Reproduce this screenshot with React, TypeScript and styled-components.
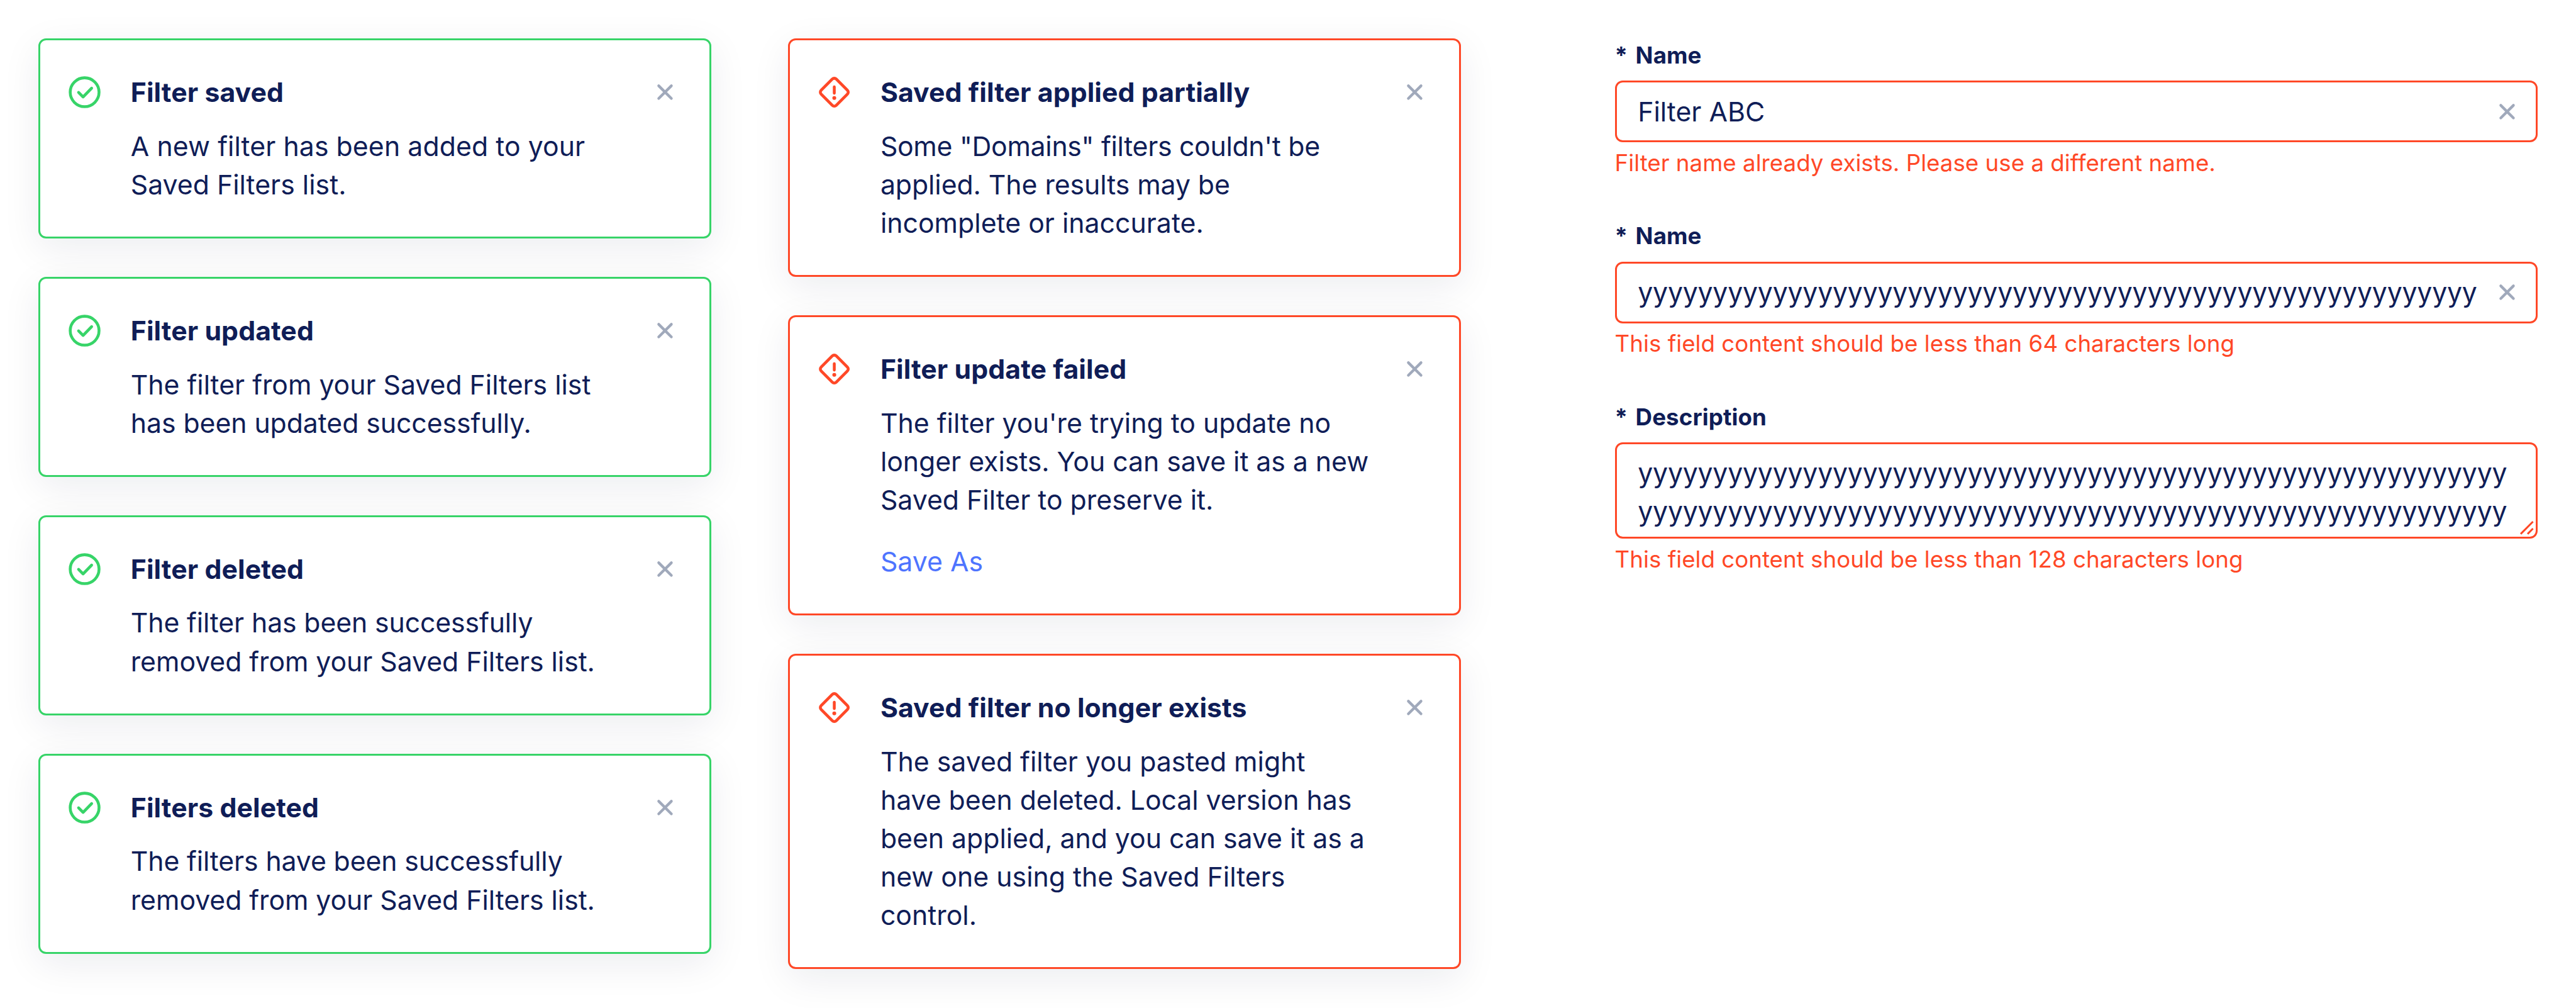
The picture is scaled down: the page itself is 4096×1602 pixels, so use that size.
import React from "react";
import styled, { createGlobalStyle } from "styled-components";

// One design unit: the sheet is 1340 units wide.
const u = (n: number) => `${(n * 4096) / 1340}px`;

const colors = {
  text: "#0f1d57",
  success: "#37d468",
  error: "#ff4827",
  link: "#4e74ff",
  icon: "#a0a9bb",
};

const GlobalStyle = createGlobalStyle`
  *, *::before, *::after { box-sizing: border-box; }
  body {
    margin: 0;
    background: #fff;
    color: ${colors.text};
    font-family: Inter, "Liberation Sans", sans-serif;
    font-size: ${u(14)};
    line-height: ${u(20)};
  }
`;

const Page = styled.main`
  display: flex;
  align-items: flex-start;
  width: ${u(1340)};
  height: 1602px;
  padding: ${u(20)};
  overflow: hidden;
`;

const Column = styled.section`
  display: flex;
  flex-direction: column;
  gap: ${u(20)};
  width: ${u(350)};
  margin-right: ${u(40)};
`;

const Form = styled.form`
  display: flex;
  flex-direction: column;
  width: ${u(480)};
  margin-left: ${u(40)};
`;

const Toast = styled.article<{ $tone: Tone }>`
  display: grid;
  grid-template-columns: ${u(20)} 1fr ${u(16)};
  column-gap: ${u(14)};
  padding: ${u(17)} ${u(15)} ${u(17)} ${u(13)};
  border: ${u(1)} solid ${(p) => colors[p.$tone]};
  border-radius: ${u(4)};
  background: #fff;
  box-shadow: 0 ${u(5)} ${u(20)} rgba(18, 28, 70, 0.08);
`;

const ToastIcon = styled.svg`
  width: ${u(20)};
  height: ${u(20)};
  fill: none;
  stroke-width: 1.5;
  stroke-linecap: round;
  stroke-linejoin: round;
`;

const ToastBody = styled.div`
  display: flex;
  flex-direction: column;
  gap: ${u(8)};
`;

const Title = styled.h2`
  margin: 0;
  font-size: ${u(14)};
  line-height: ${u(20)};
  font-weight: 700;
  letter-spacing: ${u(0.02)};
`;

const Message = styled.p`
  margin: 0;
  white-space: nowrap;
`;

const Line = styled.span<{ $tracking: number }>`
  display: block;
  letter-spacing: ${(p) => u(p.$tracking)};
`;

const Action = styled.a`
  margin-top: ${u(4)};
  color: ${colors.link};
  text-decoration: none;
`;

const IconButton = styled.button`
  display: flex;
  align-items: center;
  justify-content: center;
  flex: none;
  width: ${u(16)};
  height: ${u(20)};
  padding: 0;
  border: 0;
  background: none;
  color: ${colors.icon};
`;

const CloseSvg = styled.svg`
  width: ${u(16)};
  height: ${u(16)};
  fill: none;
  stroke: currentColor;
  stroke-width: 1.4;
  stroke-linecap: round;
`;

const Field = styled.div<{ $last?: boolean }>`
  display: flex;
  flex-direction: column;
  height: ${(p) => (p.$last ? "auto" : u(94))};
`;

const Label = styled.label`
  height: ${u(22)};
  font-size: ${u(12)};
  line-height: ${u(17.6)};
  font-weight: 700;
  letter-spacing: ${u(0.03)};
`;

const Required = styled.span`
  display: inline-block;
  width: ${u(10.8)};
`;

const InputBox = styled.div`
  display: flex;
  align-items: center;
  justify-content: space-between;
  height: ${u(32)};
  padding: 0 ${u(7)} 0 ${u(11)};
  border: ${u(1)} solid ${colors.error};
  border-radius: ${u(4)};
`;

const Value = styled.span<{ $tracking?: number }>`
  white-space: nowrap;
  letter-spacing: ${(p) => u(p.$tracking ?? 0)};
`;

const TextArea = styled.div`
  position: relative;
  height: ${u(50)};
  padding: ${u(5)} ${u(11)};
  border: ${u(1)} solid ${colors.error};
  border-radius: ${u(4)};
  letter-spacing: ${u(-0.07)};
  white-space: pre;
  overflow: hidden;
`;

const Grip = styled.svg`
  position: absolute;
  right: 0;
  bottom: 0;
  width: ${u(10)};
  height: ${u(10)};
  fill: none;
  stroke: ${colors.error};
  stroke-width: 1;
`;

const ErrorText = styled.span`
  margin-top: ${u(1.55)};
  color: ${colors.error};
  font-size: ${u(12)};
  line-height: ${u(18)};
  letter-spacing: ${u(0.008)};
  white-space: nowrap;
`;

type Tone = "success" | "error";

const SuccessIcon = () => (
  <ToastIcon viewBox="0 0 20 20" stroke={colors.success}>
    <circle cx="10" cy="10" r="7.5" />
    <path d="M6.85 10.1L9.2 12.45L13.65 7.9" />
  </ToastIcon>
);

const ErrorIcon = () => (
  <ToastIcon viewBox="0 0 20 20" stroke={colors.error}>
    <path d="M8.96 3.18a1.47 1.47 0 0 1 2.08 0L16.82 8.96a1.47 1.47 0 0 1 0 2.08L11.04 16.82a1.47 1.47 0 0 1-2.08 0L3.18 11.04a1.47 1.47 0 0 1 0-2.08z" />
    <path d="M10 7.25v3.25" />
    <circle cx="10" cy="13" r="1" fill={colors.error} stroke="none" />
  </ToastIcon>
);

const CloseButton = () => (
  <IconButton type="button" aria-label="Close">
    <CloseSvg viewBox="0 0 16 16">
      <path d="M4.7 4.7l6.6 6.6M11.3 4.7l-6.6 6.6" />
    </CloseSvg>
  </IconButton>
);

interface ToastData {
  title: string;
  // Each line carries its own tracking, in design units.
  lines: [text: string, tracking: number][];
  action?: string;
}

const successes: ToastData[] = [
  { title: "Filter saved", lines: [["A new filter has been added to your", 0.02], ["Saved Filters list.", 0]] },
  {
    title: "Filter updated",
    lines: [["The filter from your Saved Filters list", -0.01], ["has been updated successfully.", -0.025]],
  },
  {
    title: "Filter deleted",
    lines: [["The filter has been successfully", -0.045], ["removed from your Saved Filters list.", -0.02]],
  },
  {
    title: "Filters deleted",
    lines: [["The filters have been successfully", -0.045], ["removed from your Saved Filters list.", -0.02]],
  },
];

const failures: ToastData[] = [
  {
    title: "Saved filter applied partially",
    lines: [
      ["Some \"Domains\" filters couldn't be", -0.1],
      ["applied. The results may be", -0.025],
      ["incomplete or inaccurate.", 0],
    ],
  },
  {
    title: "Filter update failed",
    lines: [
      ["The filter you're trying to update no", 0],
      ["longer exists. You can save it as a new", -0.015],
      ["Saved Filter to preserve it.", 0],
    ],
    action: "Save As",
  },
  {
    title: "Saved filter no longer exists",
    lines: [
      ["The saved filter you pasted might", 0],
      ["have been deleted. Local version has", -0.015],
      ["been applied, and you can save it as a", -0.01],
      ["new one using the Saved Filters", 0],
      ["control.", 0],
    ],
  },
];

const Notification = ({ tone, data }: { tone: Tone; data: ToastData }) => (
  <Toast $tone={tone}>
    {tone === "success" ? <SuccessIcon /> : <ErrorIcon />}
    <ToastBody>
      <Title>{data.title}</Title>
      <Message>
        {data.lines.map(([text, tracking]) => (
          <Line key={text} $tracking={tracking}>
            {text}
          </Line>
        ))}
      </Message>
      {data.action && <Action>{data.action}</Action>}
    </ToastBody>
    <CloseButton />
  </Toast>
);

const FieldLabel = ({ children }: { children: string }) => (
  <Label>
    <Required>*</Required>
    {children}
  </Label>
);

export default function App() {
  const row = "y".repeat(58);
  return (
    <>
      <GlobalStyle />
      <Page>
        <Column>
          {successes.map((t) => (
            <Notification key={t.title} tone="success" data={t} />
          ))}
        </Column>
        <Column>
          {failures.map((t) => (
            <Notification key={t.title} tone="error" data={t} />
          ))}
        </Column>
        <Form>
          <Field>
            <FieldLabel>Name</FieldLabel>
            <InputBox>
              <Value>Filter ABC</Value>
              <CloseButton />
            </InputBox>
            <ErrorText>Filter name already exists. Please use a different name.</ErrorText>
          </Field>
          <Field>
            <FieldLabel>Name</FieldLabel>
            <InputBox>
              <Value $tracking={-0.07}>{"y".repeat(56)}</Value>
              <CloseButton />
            </InputBox>
            <ErrorText>This field content should be less than 64 characters long</ErrorText>
          </Field>
          <Field $last>
            <FieldLabel>Description</FieldLabel>
            <TextArea>
              {row + "\n" + row}
              <Grip viewBox="0 0 10 10">
                <path d="M2.3 8.7L8.7 2.3M5.9 8.7L8.7 5.9" />
              </Grip>
            </TextArea>
            <ErrorText>This field content should be less than 128 characters long</ErrorText>
          </Field>
        </Form>
      </Page>
    </>
  );
}
